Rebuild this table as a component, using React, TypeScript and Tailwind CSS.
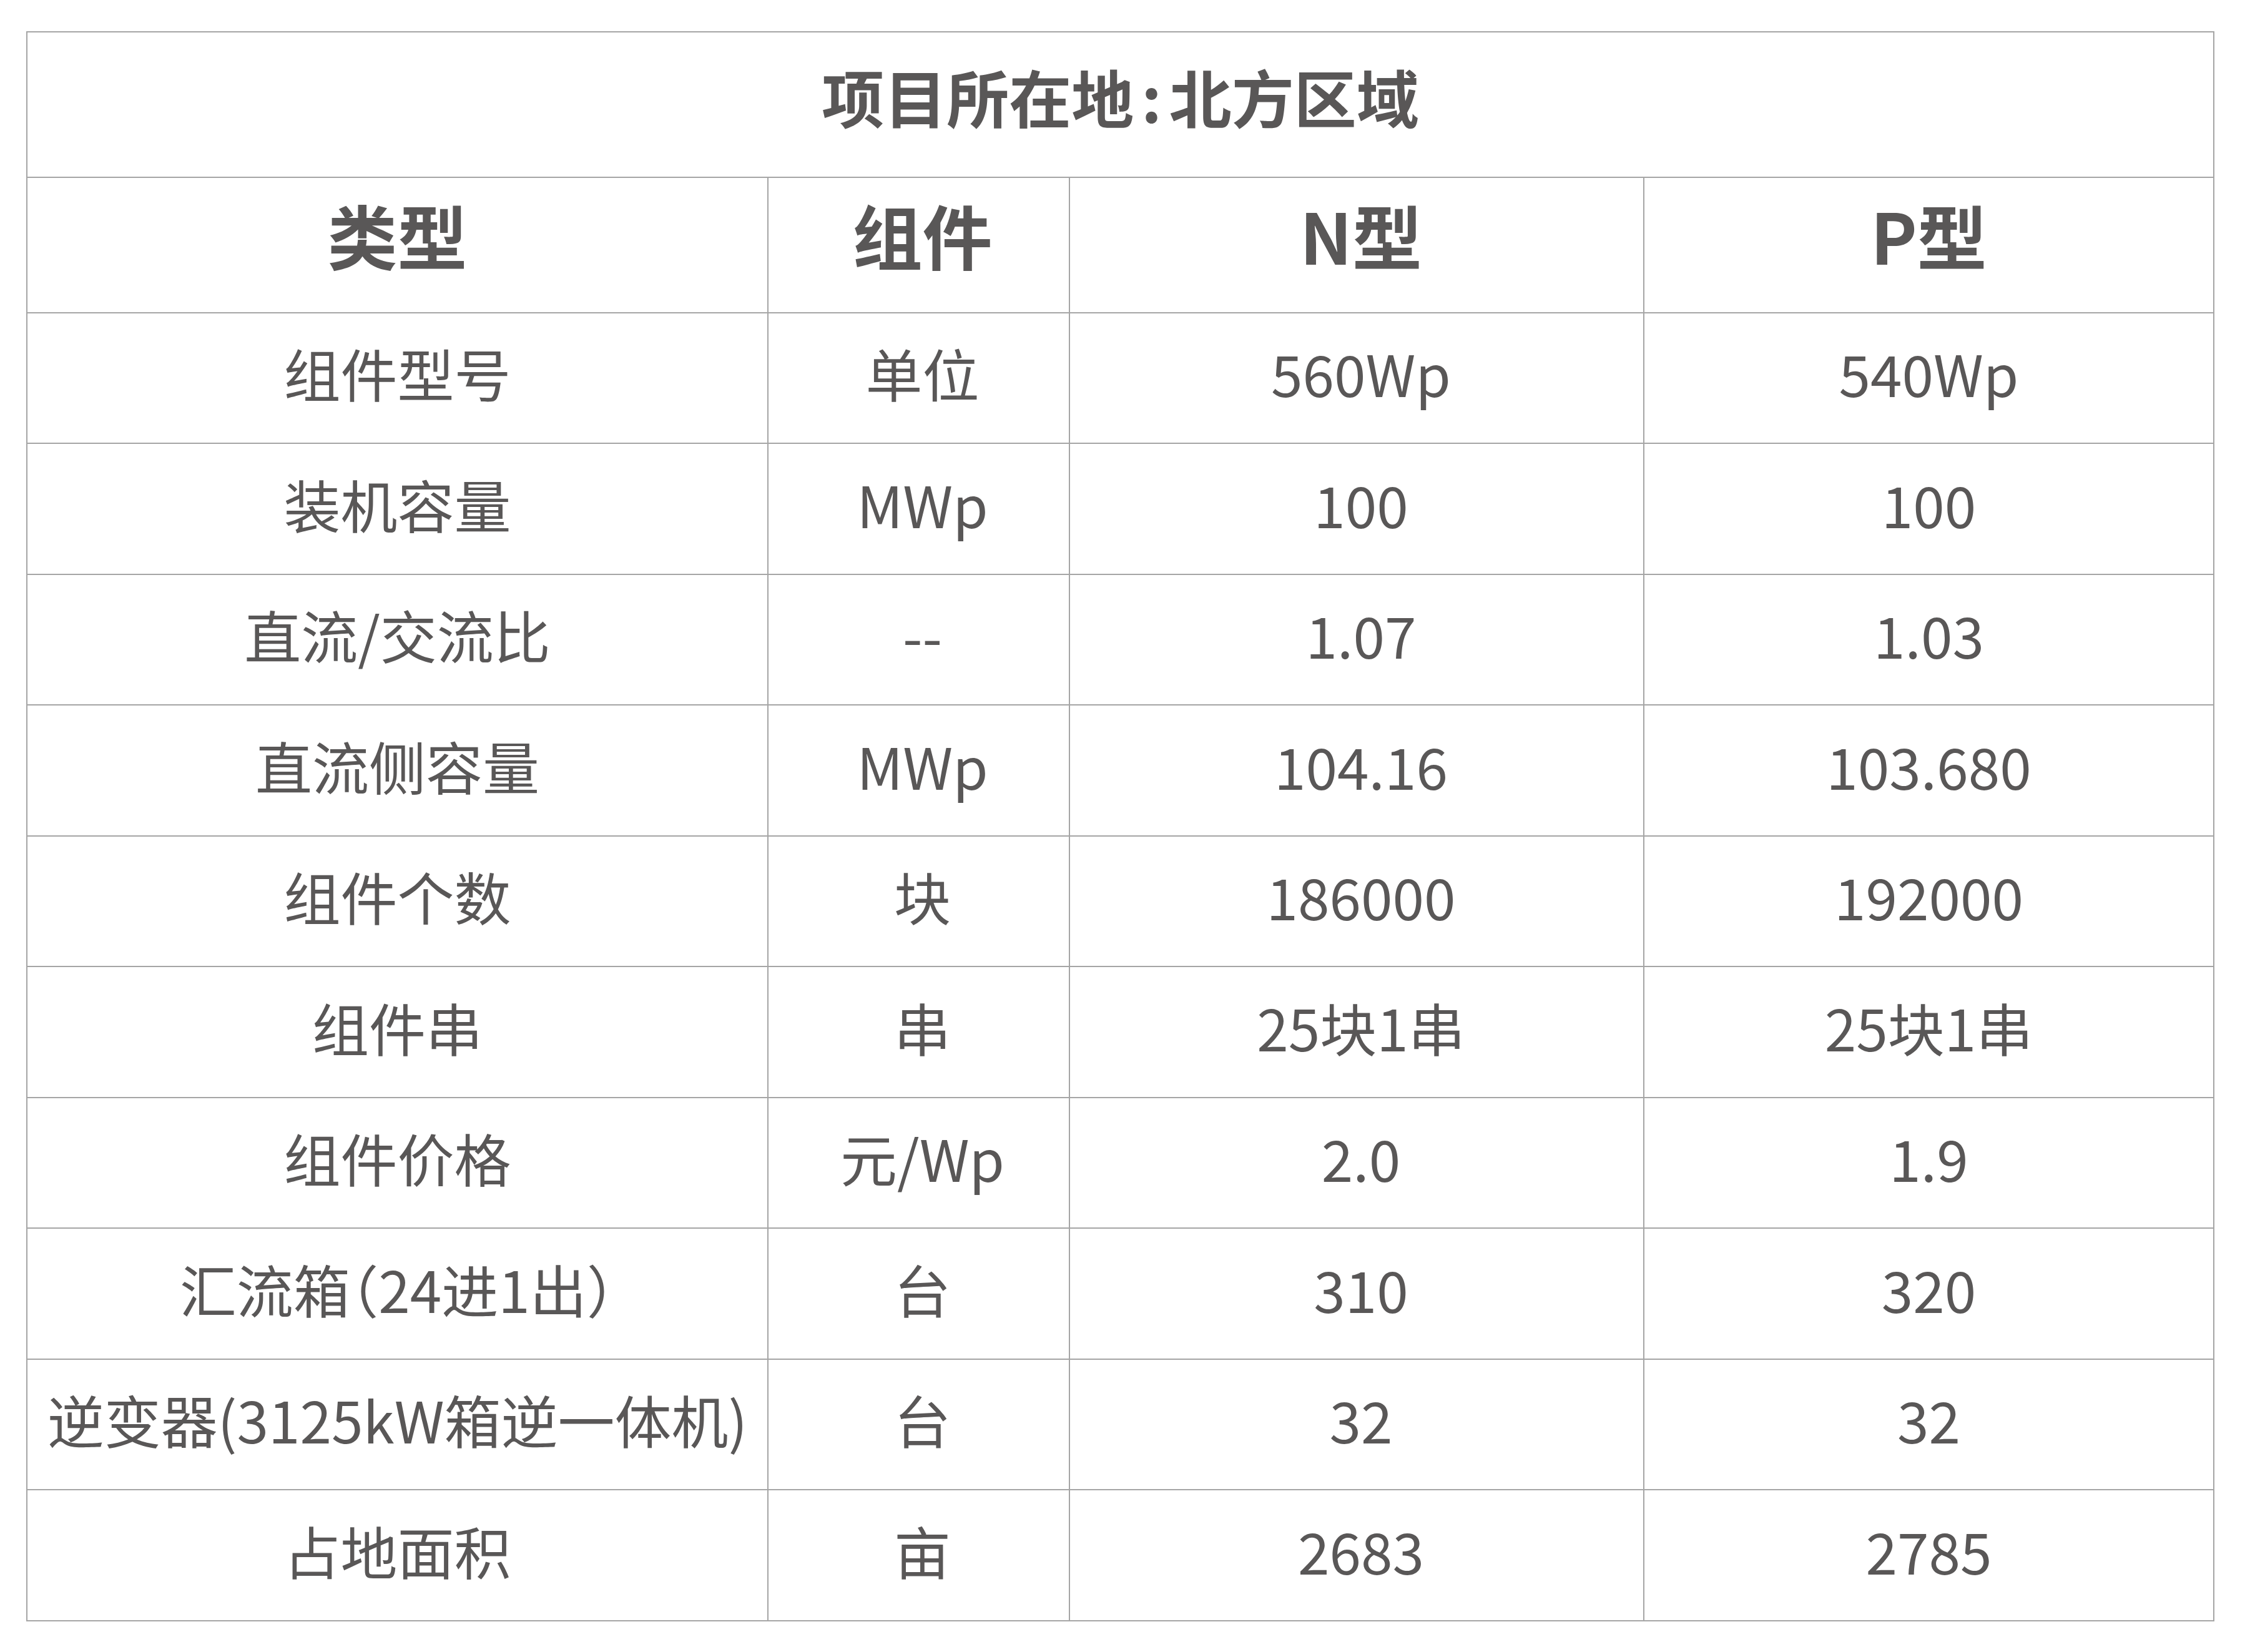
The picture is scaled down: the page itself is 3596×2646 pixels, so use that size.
import React from "react";

const ROWS: string[][] = [
  ["组件型号", "单位", "560Wp", "540Wp"],
  ["装机容量", "MWp", "100", "100"],
  ["直流/交流比", "--", "1.07", "1.03"],
  ["直流侧容量", "MWp", "104.16", "103.680"],
  ["组件个数", "块", "186000", "192000"],
  ["组件串", "串", "25块1串", "25块1串"],
  ["组件价格", "元/Wp", "2.0", "1.9"],
  ["汇流箱（24进1出）", "台", "310", "320"],
  ["逆变器(3125kW箱逆一体机)", "台", "32", "32"],
  ["占地面积", "亩", "2683", "2785"],
];

const HEAD = ["类型", "组件", "N型", "P型"];

// small nudge the original has in the middle columns
const SHIFT = ["", "pl-[12px]", "pl-[14px]", ""];

export default function App() {
  return (
    <div
      className="w-[3596px] h-[2646px] bg-white pt-[50px] pl-[42px] text-[#595757]"
      style={{ fontFamily: '"Noto Sans CJK SC", "Noto Sans", sans-serif' }}
    >
      <div className="grid w-[3505px] grid-cols-[1187px_483px_920px_913px] border-t-2 border-l-2 border-[#a5a5a5]">
        {/* title */}
        <div className="col-span-4 flex h-[233px] items-center justify-center border-r-2 border-b-2 border-[#a5a5a5] pb-[28px] text-[100px] font-bold leading-none">
          项目所在地<span className="px-[12px]">:</span>北方区域
        </div>

        {/* header */}
        {HEAD.map((h, i) => (
          <div
            key={i}
            className={
              "flex h-[217px] items-center justify-center border-r-2 border-b-2 border-[#a5a5a5] pb-[36px] text-[112px] font-bold leading-none " +
              SHIFT[i]
            }
          >
            {h}
          </div>
        ))}

        {/* data */}
        {ROWS.map((row, r) =>
          row.map((cell, c) => (
            <div
              key={r + "-" + c}
              className={
                "flex items-center justify-center border-r-2 border-b-2 border-[#a5a5a5] pb-[18px] text-[91px] leading-none whitespace-nowrap [font-feature-settings:'halt'] " +
                (r % 2 === 0 ? "h-[209px] " : "h-[210px] ") +
                SHIFT[c]
              }
            >
              {cell}
            </div>
          ))
        )}
      </div>
    </div>
  );
}
